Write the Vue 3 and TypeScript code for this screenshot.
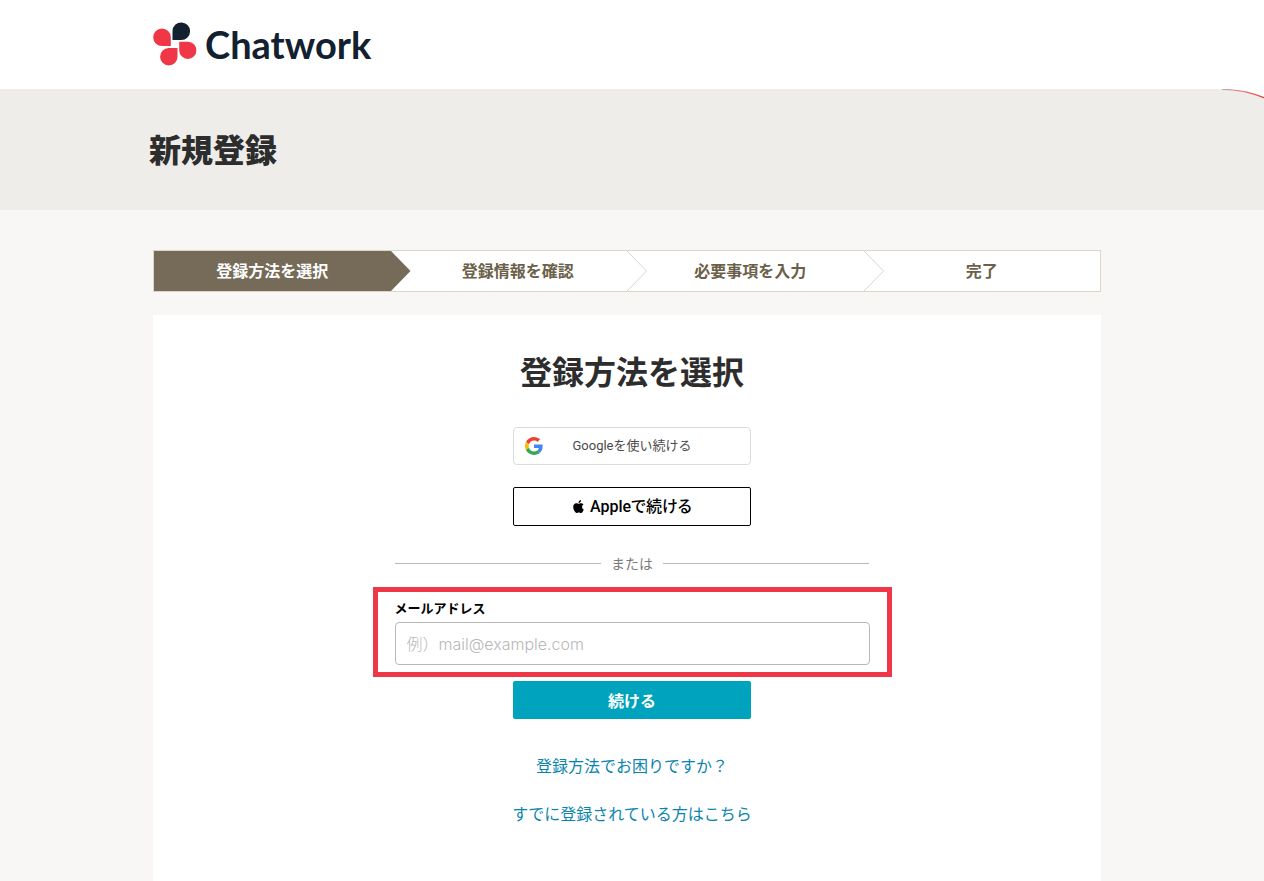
<script setup lang="ts">
import { ref } from 'vue'

interface Step {
  label: string
  active: boolean
}

const steps: Step[] = [
  { label: '登録方法を選択', active: true },
  { label: '登録情報を確認', active: false },
  { label: '必要事項を入力', active: false },
  { label: '完了', active: false },
]

const email = ref('')
</script>

<template>
  <div class="page">
    <header class="header">
      <div class="wrap">
        <a class="logo" href="#" aria-label="Chatwork">
          <svg class="logo-mark" viewBox="0 0 44 44" aria-hidden="true">
            <path fill="#12202f" d="M19.500 18V9a8.800 8.800 0 1 1 8.800 9z" />
            <path fill="#f03747" d="M17.800 24H9a8.800 8.800 0 1 1 8.800-8.800z" />
            <path fill="#f03747" d="M26.200 19.700H35a8.600 8.600 0 1 1-8.800 8.600z" />
            <path fill="#f03747" d="M24.500 26v8.800a8.700 8.700 0 1 1-8.700-8.800z" />
          </svg>
          <span class="logo-name">Chatwork</span>
        </a>
      </div>
    </header>

    <div class="band">
      <svg class="curve" viewBox="0 0 44 12" aria-hidden="true">
        <defs>
          <linearGradient id="curve-fade" x1="0" x2="1" y1="0" y2="0">
            <stop offset="0" stop-color="#b9b4ae" />
            <stop offset=".5" stop-color="#f0706c" />
            <stop offset="1" stop-color="#e8302c" />
          </linearGradient>
        </defs>
        <path fill="#fff" d="M0 0Q23 0 44 8.500V0z" />
        <path fill="none" stroke="url(#curve-fade)" stroke-width="1.200" d="M2 .4Q24 .5 44 8.700" />
      </svg>
      <div class="wrap">
        <h1 class="title">新規登録</h1>
      </div>
    </div>

    <main class="wrap main">
      <ol class="steps">
        <li v-for="step in steps" :key="step.label" class="step" :class="{ active: step.active }">
          <span>{{ step.label }}</span>
          <svg class="arrow" viewBox="0 0 20 40" aria-hidden="true">
            <path d="M0 0L19.500 20L0 40" />
          </svg>
        </li>
      </ol>

      <section class="card">
        <h2 class="heading">登録方法を選択</h2>
        <form class="form" @submit.prevent>
          <button class="btn google" type="button">
            <svg class="g-icon" viewBox="0 0 48 48" aria-hidden="true">
              <path fill="#EA4335" d="M24 9.500c3.540 0 6.710 1.220 9.210 3.600l6.850-6.850C35.900 2.380 30.470 0 24 0 14.620 0 6.510 5.380 2.560 13.220l7.980 6.190C12.430 13.720 17.740 9.500 24 9.500z" />
              <path fill="#4285F4" d="M46.980 24.550c0-1.570-.15-3.090-.38-4.550H24v9.020h12.940c-.58 2.960-2.260 5.480-4.780 7.180l7.730 6c4.510-4.180 7.090-10.360 7.090-17.650z" />
              <path fill="#FBBC05" d="M10.530 28.590c-.48-1.450-.76-2.990-.76-4.590s.27-3.140.76-4.590l-7.980-6.190C.92 16.460 0 20.120 0 24c0 3.880.92 7.540 2.560 10.780l7.970-6.190z" />
              <path fill="#34A853" d="M24 48c6.480 0 11.930-2.130 15.890-5.810l-7.730-6c-2.150 1.450-4.920 2.300-8.160 2.300-6.260 0-11.570-4.220-13.470-9.910l-7.980 6.190C6.510 42.620 14.620 48 24 48z" />
            </svg>
            <span>Googleを使い続ける</span>
          </button>

          <button class="btn apple" type="button">
            <svg class="a-icon" viewBox="0 0 24 24" aria-hidden="true">
              <path d="M12.152 6.896c-.948 0-2.415-1.078-3.960-1.040-2.040.027-3.910 1.183-4.961 3.014-2.117 3.675-.546 9.103 1.519 12.090 1.013 1.454 2.208 3.090 3.792 3.039 1.520-.065 2.090-.987 3.935-.987 1.831 0 2.350.987 3.960.948 1.637-.026 2.676-1.480 3.676-2.948 1.156-1.688 1.636-3.325 1.662-3.415-.039-.013-3.182-1.221-3.220-4.857-.026-3.040 2.480-4.494 2.597-4.559-1.429-2.090-3.623-2.324-4.390-2.376-2-.156-3.675 1.090-4.610 1.090zM15.530 3.830c.843-1.012 1.400-2.427 1.245-3.830-1.207.052-2.662.805-3.532 1.818-.780.896-1.454 2.338-1.273 3.714 1.338.104 2.715-.688 3.559-1.701" />
            </svg>
            <span>Appleで続ける</span>
          </button>

          <div class="or"><span>または</span></div>

          <div class="field">
            <label for="email">メールアドレス</label>
            <input id="email" v-model="email" type="email" placeholder="例）mail@example.com" />
          </div>

          <button class="btn submit" type="submit">続ける</button>
        </form>

        <nav class="links">
          <a href="#">登録方法でお困りですか？</a>
          <a href="#">すでに登録されている方はこちら</a>
        </nav>
      </section>
    </main>
  </div>
</template>

<style>
body {
  margin: 0;
  background: #f8f7f5;
}
</style>

<style scoped>
.page {
  display: flex;
  flex-direction: column;
  min-height: 100vh;
  box-sizing: border-box;
  font-family: "Noto Sans CJK JP", sans-serif;
  color: #2d2d2d;
}
.page *,
.page *::before,
.page *::after {
  box-sizing: border-box;
}
.wrap {
  width: 100%;
  max-width: 958px;
  margin: 0 auto;
  padding-right: 10px;
}
.header {
  background: #fff;
  padding: 22px 0 23px;
}
.logo {
  display: flex;
  width: fit-content;
  align-items: center;
  gap: 8px;
  color: #12202f;
  text-decoration: none;
}
.logo-mark {
  width: 44px;
  height: 44px;
}
.logo-name {
  font: 700 38px/44px Lato, sans-serif;
}
.band {
  position: relative;
  background: #eeede9;
  padding: 35px 0 38px;
}
.curve {
  position: absolute;
  top: 0;
  right: 0;
  width: 44px;
  height: 12px;
}
.title {
  margin: 0 0 0 -4px;
  font-size: 32px;
  line-height: 48px;
  font-weight: 900;
}
.main {
  flex: 1;
  display: flex;
  flex-direction: column;
  padding-top: 40px;
}
.steps {
  list-style: none;
  margin: 0;
  padding: 0;
  display: grid;
  grid-template-columns: repeat(4, 1fr);
  border: 1px solid #dad6c8;
  background: #fff;
}
.step {
  position: relative;
  height: 40px;
  padding-bottom: 2px;
  display: flex;
  align-items: center;
  justify-content: center;
  font-size: 16px;
  line-height: 24px;
  font-weight: 700;
  color: #6b6049;
}
.step:nth-child(2) {
  padding-left: 18px;
}
.step:nth-child(3) {
  padding-left: 10px;
}
.step.active {
  background: #756b58;
  color: #fff;
}
.arrow {
  position: absolute;
  top: 0;
  left: 100%;
  width: 20px;
  height: 40px;
  fill: #fff;
  stroke: #dad6c8;
}
.active .arrow {
  fill: #756b58;
  stroke: none;
}
.step:last-child .arrow {
  display: none;
}
.card {
  flex: 1;
  margin-top: 23px;
  padding: 31px 0 56px 10px;
  background: #fff;
  display: flex;
  flex-direction: column;
  align-items: center;
}
.heading {
  margin: 0;
  font-size: 32px;
  line-height: 48px;
  font-weight: 700;
}
.form {
  width: 100%;
  display: flex;
  flex-direction: column;
  align-items: center;
  margin-top: 33px;
}
.btn {
  width: 238px;
  height: 38px;
  padding: 0;
  font-family: inherit;
  display: flex;
  align-items: center;
  justify-content: center;
  cursor: pointer;
}
.google {
  position: relative;
  border: 1px solid #dadce0;
  border-radius: 4px;
  background: #fff;
  color: #4a4a4a;
  font: 400 13px/20px Roboto, "Noto Sans CJK JP", sans-serif;
}
.g-icon {
  position: absolute;
  left: 11px;
  width: 18px;
  height: 18px;
}
.apple {
  height: 39px;
  margin-top: 22px;
  gap: 5px;
  border: 1px solid #000;
  border-radius: 2px;
  background: #fff;
  color: #000;
  font: 500 16px/24px Roboto, "Noto Sans CJK JP", sans-serif;
  font-feature-settings: "palt";
}
.a-icon {
  width: 13px;
  height: 13px;
}
.or {
  display: flex;
  align-items: center;
  gap: 10px;
  width: 474px;
  max-width: 100%;
  margin-top: 27px;
  font-size: 14px;
  line-height: 20px;
  color: #7a7a7a;
}
.or::before,
.or::after {
  content: "";
  flex: 1;
  height: 1px;
  background: #b8b8b8;
}
.field {
  width: 519px;
  max-width: 100%;
  margin-top: 14px;
  border: 5px solid #f03747;
  padding: 6px 17px 7px;
}
.field label {
  display: block;
  font-size: 13px;
  line-height: 20px;
  font-weight: 700;
  color: #000;
}
.field input {
  display: block;
  width: 100%;
  height: 43px;
  margin-top: 4px;
  padding: 0 11px;
  border: 1px solid #b8b8b8;
  border-radius: 4px;
  background: #fff;
  color: #2d2d2d;
  font: 300 16px/24px Inter, "Noto Sans CJK JP", sans-serif;
}
.field input::placeholder {
  color: #b8b8b8;
  opacity: 1;
}
.submit {
  margin-top: 4px;
  border: 0;
  border-radius: 2px;
  background: #00a3bd;
  color: #fff;
  font-size: 16px;
  line-height: 24px;
  font-weight: 700;
}
.links {
  display: flex;
  flex-direction: column;
  align-items: center;
  gap: 24px;
  margin-top: 34px;
  font-size: 16px;
  line-height: 24px;
}
.links a {
  color: #0a85ae;
  text-decoration: none;
}
</style>
